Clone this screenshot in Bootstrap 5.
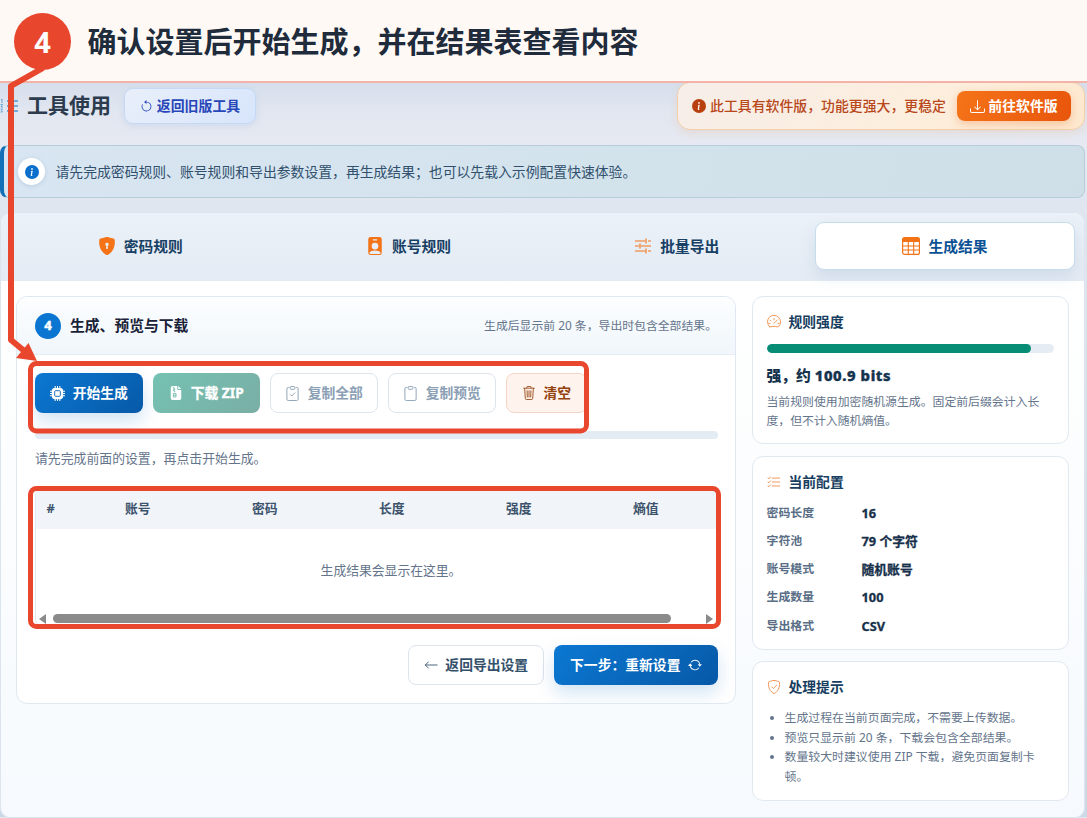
<!DOCTYPE html>
<html lang="zh-CN">
<head>
<meta charset="utf-8">
<meta name="viewport" content="width=device-width, initial-scale=1">
<title>工具使用</title>
<link href="https://cdn.jsdelivr.net/npm/bootstrap@5.3.0/dist/css/bootstrap.min.css" rel="stylesheet">
<style>
:root{--mark-red:#e8472d;--ink:#163a5c;--line:#e0e9f1;--muted-ink:#64748b;--orange:#f47316}
body{font-family:"Noto Sans","Noto Sans CJK SC",sans-serif;height:818px;overflow:hidden;color:#17324d;background:#e3e8f1;line-height:1.4;position:relative}
svg{display:block;flex:none}
.step-banner{height:83px;background:#fff9f6;border-bottom:2px solid #f4b3a8;padding:0 0 0 14px;position:relative;z-index:2}
.step-no{width:57px;height:57px;border-radius:50%;background:var(--mark-red);color:#fff;font-size:29px;font-weight:700;line-height:1;margin-top:2px}
.step-title{font-size:29px;font-weight:700;color:#202b3b;margin:4px 0 0 16.5px;line-height:1.4}
.workspace{height:735px;background:linear-gradient(180deg,#d5deec 0,#e1e6f0 28px,#e6e9f2 62px,#dfe6ef 130px,#ccd8e6 100%)}
.tool-head{height:48px;margin-top:-1px;padding-right:2px}
.tool-title{font-size:21px;font-weight:700;color:#2c3b4d;line-height:1;margin:-1px 13px 0 8px}
.old-btn{width:132px;height:36px;border:1px solid #c5d8f6;border-radius:9px;background:linear-gradient(135deg,#e9effa,#d7e5fb);color:#2746b8;font-size:13.9px;font-weight:600;gap:4px;box-shadow:0 2px 6px #9fb8df44}
.promo{width:408px;height:48px;border:1px solid #f4cfa9;border-radius:13px;background:linear-gradient(135deg,#f6eeea,#fdeedd 60%,#fde8cd);color:#b8481b;font-size:13.88px;font-weight:500;padding:0 13px 0 14px;box-shadow:0 3px 9px #e9a66833}
.promo-btn{width:114px;height:30px;border:0;border-radius:8px;background:linear-gradient(110deg,#f57419,#e8550c);color:#fff;font-size:13.9px;font-weight:700;gap:3px;box-shadow:0 3px 8px #e8590c44}
.notice{height:53px;margin:15px 2px 0 0;border:1px solid #b6cdda;border-left:4px solid #1170b8;border-radius:8px;background:linear-gradient(100deg,#d8e5f2,#d3e3ec 55%,#cfdfe8);color:#31506d;font-size:13.84px;padding-left:14px}
.notice-dot{width:27px;height:27px;border-radius:50%;background:#fff;margin-right:10.5px;box-shadow:0 1px 4px #5279a633}
.panel{height:606px;margin:14px 2px 0 0;border-radius:11px 11px 10px 10px;background:linear-gradient(180deg,#fff 0,#fff 70px,#fdfefe 180px,#f6fafe 100%);overflow:hidden;border:1px solid #dce5ee;border-top-color:#dfe5ef}
.tabs{height:68px;background:linear-gradient(180deg,#ebf1f8,#e4ebf4);padding:9px 9px 0 9px;gap:8px;display:grid;grid-template-columns:repeat(4,1fr)}
.tab-btn{height:48px;border:1px solid transparent;border-radius:9px;background:none;color:#174064;font-size:14.75px;font-weight:700;gap:8px;padding:0}
.tab-btn.active{background:#fff;border-color:#c6dced;color:#0b5294;box-shadow:0 7px 15px #6c8eb42b}
.box{border:1px solid var(--line);border-radius:11px;background:#fff}
.work-area{padding:15px 15px 0 15px;gap:16px}
.main-box{width:720px;height:408px;overflow:hidden}
.box-top{height:58px;background:linear-gradient(180deg,#fcfeff,#f0f6fb);border-bottom:1px solid #e6eef4;padding:0 18px}
.num{width:26px;height:26px;border-radius:50%;background:#0b76d1;color:#fff;font-size:13px;font-weight:800}
.box-title{font-size:14.8px;font-weight:700;color:#1a2238;margin-left:9px}
.tip-text{font-size:11.85px;color:var(--muted-ink)}
.acts{padding:18px 18px 0;gap:10px}
.act{height:40px;border-radius:8px;border:1px solid #dde4ec;background:#fff;font-size:13.8px;font-weight:700;color:#8ba0b4;gap:7.5px;padding:0}
.act-blue{color:#fff;border:0;background:linear-gradient(135deg,#0b78d2,#0759a7);box-shadow:0 8px 18px #0b6fc530}
.act-green{color:#fff;border:0;background:linear-gradient(135deg,#74c2b2,#7aaea5)}
.act-clear{color:#93430f;border-color:#f5d5c7;background:#fff3ed}
.run-track{height:8px;border-radius:5px;background:#e4ecf3;margin:18px 17px 0 18px}
.run-hint{font-size:12.87px;line-height:20px;color:var(--muted-ink);margin:9px 18px 0}
.result{margin:20px 17px 0 18px;height:139px;border:1px solid #e1e8ef;border-radius:8px;overflow:hidden}
.result table{width:710px;table-layout:fixed;border-collapse:collapse;font-size:12.8px}
.result th{height:40px;background:#f1f5fa;color:#3d526b;padding:0 14px;font-weight:700}
.result th:first-child{padding-left:10.5px}
.result td{height:84px;text-align:center;color:var(--muted-ink);padding-left:1px}
.bar-x{height:12px;padding:1px 3px 0}
.bar-thumb{width:618px;height:9px;border-radius:5px;background:#8b8b8b;margin:0 35px 0 7px}
.foot{padding:18px 17px 0;gap:10px}
.side{width:317px;gap:11.5px}
.side-box{padding:15px 14px 0 13.5px}
.side-title{font-size:13.8px;font-weight:700;color:#173e60;line-height:20px;gap:8px;margin:0}
.meter{height:9px;border-radius:5px;background:#e6ecf4;margin-top:12px;overflow:hidden}
.meter-on{height:9px;background:#078d76;border-radius:5px}
.score{font-size:14.8px;font-weight:800;line-height:22px;margin-top:11px;color:#16334e}
.score span{letter-spacing:.6px;-webkit-text-stroke:.4px currentColor}
.conf dd,.num,.zip-word{-webkit-text-stroke:.3px currentColor}
.desc{font-size:11.87px;line-height:19px;color:var(--muted-ink);margin:5.5px -6px 0 0}
.conf{display:grid;grid-template-columns:95px 1fr;row-gap:8.3px;line-height:20px;margin:11px 0 0}
.conf dt{font-size:11.9px;font-weight:600;color:#596e86;line-height:18px}
.conf dd{font-size:12.8px;font-weight:700;color:#17304a;margin:0}
.tips{font-size:11.9px;line-height:19.6px;color:var(--muted-ink);padding-left:18px;margin:11px 0 0}
.callout-layer{position:absolute;left:0;top:0;z-index:3;pointer-events:none}
</style>
</head>
<body>
<header class="step-banner d-flex align-items-center">
  <div class="step-no d-flex align-items-center justify-content-center">4</div>
  <h1 class="step-title">确认设置后开始生成，并在结果表查看内容</h1>
</header>
<main class="workspace d-flow-root">
  <div class="tool-head d-flex align-items-center">
    <svg width="19" height="16" viewBox="0 0 19 16" stroke="#4f9bd3" fill="none"><path d="M7 3h11M7 8h11M7 13h11" stroke-width="1.6"/><path d="M1 2l1-1v4M.5 6.5h2L1 9h2M.5 11h2l-1 1.500 1 1.500H.5" stroke-width=".8"/></svg>
    <h2 class="tool-title">工具使用</h2>
    <button class="btn old-btn d-flex align-items-center justify-content-center p-0"><svg width="13" height="13" viewBox="0 0 16 16" fill="currentColor"><path fill-rule="evenodd" d="M8 3a5 5 0 1 1-4.546 2.914.5.5 0 0 0-.908-.417A6 6 0 1 0 8 2z"/><path d="M8 4.466V.534a.25.25 0 0 0-.41-.192L5.230 2.308a.25.25 0 0 0 0 .384l2.360 1.966A.25.25 0 0 0 8 4.466"/></svg>返回旧版工具</button>
    <div class="promo d-flex align-items-center ms-auto">
      <svg width="14" height="14" viewBox="0 0 16 16" fill="#b8400e"><circle cx="8" cy="8" r="8"/><path fill="#fff" d="m8.930 6.588-2.290.287-.082.380.450.083c.294.070.352.176.288.469l-.738 3.468c-.194.897.105 1.319.808 1.319.545 0 1.178-.252 1.465-.598l.088-.416c-.200.176-.492.246-.686.246-.275 0-.375-.193-.304-.533zM9 4.500a1 1 0 1 1-2 0 1 1 0 0 1 2 0"/></svg>
      <span class="text-nowrap ms-1">此工具有软件版，功能更强大，更稳定</span>
      <button class="btn promo-btn d-flex align-items-center justify-content-center p-0 ms-auto"><svg width="15" height="15" viewBox="0 0 16 16" fill="currentColor"><path d="M.5 9.900a.5.5 0 0 1 .5.500v2.500a1 1 0 0 0 1 1h12a1 1 0 0 0 1-1v-2.500a.5.5 0 0 1 1 0v2.500a2 2 0 0 1-2 2H2a2 2 0 0 1-2-2v-2.500a.5.5 0 0 1 .5-.5"/><path d="M7.646 11.854a.5.5 0 0 0 .708 0l3-3a.5.5 0 0 0-.708-.708L8.500 10.293V1.500a.5.5 0 0 0-1 0v8.793L5.354 8.146a.5.5 0 1 0-.708.708z"/></svg>前往软件版</button>
    </div>
  </div>

  <div class="notice d-flex align-items-center">
    <span class="notice-dot d-flex align-items-center justify-content-center"><svg width="14" height="14" viewBox="0 0 16 16" fill="#0b70cc"><circle cx="8" cy="8" r="8"/><path fill="#fff" d="m8.930 6.588-2.290.287-.082.380.450.083c.294.070.352.176.288.469l-.738 3.468c-.194.897.105 1.319.808 1.319.545 0 1.178-.252 1.465-.598l.088-.416c-.200.176-.492.246-.686.246-.275 0-.375-.193-.304-.533zM9 4.500a1 1 0 1 1-2 0 1 1 0 0 1 2 0"/></svg></span>
    <span class="text-nowrap">请先完成密码规则、账号规则和导出参数设置，再生成结果；也可以先载入示例配置快速体验。</span>
  </div>

  <section class="panel">
    <nav class="tabs">
      <button class="btn tab-btn d-flex align-items-center justify-content-center"><svg width="18" height="18" viewBox="0 0 16 16" fill="#f47316"><path fill-rule="evenodd" d="M8 0c-.690 0-1.843.265-2.928.560-1.110.300-2.229.655-2.887.870a1.540 1.540 0 0 0-1.044 1.262c-.596 4.477.787 7.795 2.465 9.990a11.800 11.800 0 0 0 2.517 2.453c.386.273.744.482 1.048.625.280.132.581.240.829.240s.548-.108.829-.240a7 7 0 0 0 1.048-.625 11.800 11.800 0 0 0 2.517-2.453c1.678-2.195 3.061-5.513 2.465-9.990a1.540 1.540 0 0 0-1.044-1.263c-.658-.215-1.777-.562-2.887-.870C9.843.266 8.690 0 8 0m0 5a1.500 1.500 0 0 1 .5 2.915l.385 1.990a.5.5 0 0 1-.491.595h-.788a.5.5 0 0 1-.490-.595l.384-1.990A1.500 1.500 0 0 1 8 5"/></svg>密码规则</button>
      <button class="btn tab-btn d-flex align-items-center justify-content-center"><svg width="18" height="18" viewBox="0 0 16 16" fill="#f47316"><path fill-rule="evenodd" d="M2 2a2 2 0 0 1 2-2h8a2 2 0 0 1 2 2v12a2 2 0 0 1-2 2H4a2 2 0 0 1-2-2zm4.500 0a.5.5 0 0 0 0 1h3a.5.5 0 0 0 0-1zM8 11a3 3 0 1 0 0-6 3 3 0 0 0 0 6m5 2.755C12.146 12.825 10.623 12 8 12s-4.146.826-5 1.755V14a1 1 0 0 0 1 1h8a1 1 0 0 0 1-1z"/></svg>账号规则</button>
      <button class="btn tab-btn d-flex align-items-center justify-content-center"><svg width="18" height="18" viewBox="0 0 18 18" fill="none" stroke="#f47316" stroke-width="1.150"><path d="M1 4h10M14 4h3M12 1.500v5M1 9h4M7 9h10M6 6.500v5M1 14h10M14 14h3M12 11.500v5"/></svg>批量导出</button>
      <button class="btn tab-btn active d-flex align-items-center justify-content-center"><svg width="18" height="18" viewBox="0 0 18 18"><rect x=".6" y=".6" width="16.800" height="16.800" rx="2" fill="#fff" stroke="#f47316" stroke-width="1.200"/><path d="M.5 5V2.500a2 2 0 0 1 2-2h13a2 2 0 0 1 2 2V5z" fill="#f47316"/><path d="M.5 9h17M.5 13h17M6.300 5v12.500M11.700 5v12.500" stroke="#f47316" stroke-width="1.100"/></svg>生成结果</button>
    </nav>
    <div class="work-area d-flex align-items-start">
      <article class="box main-box flex-shrink-0">
        <div class="box-top d-flex align-items-center">
          <span class="num d-flex align-items-center justify-content-center">4</span>
          <span class="box-title">生成、预览与下载</span>
          <span class="tip-text ms-auto">生成后显示前 20 条，导出时包含全部结果。</span>
        </div>
        <div class="acts d-flex">
          <button class="btn act act-blue d-flex align-items-center justify-content-center" style="width:108px"><svg width="15" height="15" viewBox="0 0 16 16"><path d="M5.500 0v16M8 0v16M10.500 0v16M0 5.500h16M0 8h16M0 10.500h16" stroke="#fff" stroke-width="1.100"/><rect x="2" y="2" width="12" height="12" rx="3" fill="#fff"/><rect x="5" y="5" width="6" height="6" rx="1" fill="none" stroke="#1768b5"/></svg>开始生成</button>
          <button class="btn act act-green d-flex align-items-center justify-content-center" style="width:107px"><svg width="14" height="14" viewBox="0 0 16 16"><path d="M4 0h5.500v3.500a1 1 0 0 0 1 1H14V14a2 2 0 0 1-2 2H4a2 2 0 0 1-2-2V2a2 2 0 0 1 2-2m6.500 0L14 3.500h-3.500z" fill="#fff"/><path d="M5 1v1.500h1.500V4H5v1.500h1.500V7M5 8.500h3v4H5zM5 10.500h3" fill="none" stroke="#74b8aa"/></svg><span class="zip-word">下载 ZIP</span></button>
          <button class="btn act d-flex align-items-center justify-content-center" style="width:108px"><svg width="15" height="15" viewBox="0 0 16 16" fill="none" stroke="currentColor"><path d="M4.500 1.500h-1a1.500 1.500 0 0 0-1.500 1.500v11a1.500 1.500 0 0 0 1.500 1.500h9A1.500 1.500 0 0 0 14 14V3a1.500 1.500 0 0 0-1.500-1.500h-1M6.500.5h3a1 1 0 0 1 1 1v1a1 1 0 0 1-1 1h-3a1 1 0 0 1-1-1v-1a1 1 0 0 1 1-1zM5.500 9l1.700 1.700L10.700 7"/></svg>复制全部</button>
          <button class="btn act d-flex align-items-center justify-content-center" style="width:108px"><svg width="15" height="15" viewBox="0 0 16 16" fill="none" stroke="currentColor"><path d="M4.500 1.500h-1a1.500 1.500 0 0 0-1.500 1.500v11a1.500 1.500 0 0 0 1.500 1.500h9A1.500 1.500 0 0 0 14 14V3a1.500 1.500 0 0 0-1.500-1.500h-1M6.500.5h3a1 1 0 0 1 1 1v1a1 1 0 0 1-1 1h-3a1 1 0 0 1-1-1v-1a1 1 0 0 1 1-1z"/></svg>复制预览</button>
          <button class="btn act act-clear d-flex align-items-center justify-content-center" style="width:81px"><svg width="14" height="14" viewBox="0 0 16 16" fill="none" stroke="currentColor"><path d="M1.500 2.500h13M5.500 2.500v-1a1 1 0 0 1 1-1h3a1 1 0 0 1 1 1v1M3 2.500l.8 11.600a1.500 1.500 0 0 0 1.500 1.400h5.400a1.500 1.500 0 0 0 1.500-1.400L13 2.500M5.800 5l.3 8M8 5v8M10.200 5l-.3 8"/></svg>清空</button>
        </div>
        <div class="run-track"></div>
        <div class="run-hint">请先完成前面的设置，再点击开始生成。</div>
        <div class="result">
          <table>
            <colgroup><col style="width:75px"><col span="5" style="width:127px"></colgroup>
            <thead><tr><th>#</th><th>账号</th><th>密码</th><th>长度</th><th>强度</th><th>熵值</th></tr></thead>
            <tbody><tr><td colspan="6">生成结果会显示在这里。</td></tr></tbody>
          </table>
          <div class="bar-x d-flex"><svg width="7" height="10" viewBox="0 0 7 10"><path d="M7 0v10L0 5z" fill="#8b8b8b"/></svg><div class="bar-thumb flex-shrink-0"></div><svg width="7" height="10" viewBox="0 0 7 10"><path d="M0 0v10l7-5z" fill="#8b8b8b"/></svg></div>
        </div>
        <div class="foot d-flex justify-content-end">
          <button class="btn act d-flex align-items-center justify-content-center" style="width:136px;color:#34516c"><svg width="14" height="14" viewBox="0 0 16 16" fill="none" stroke="currentColor" stroke-linecap="round"><path d="M15 8H1.500M5 4.500L1.500 8 5 11.500"/></svg>返回导出设置</button>
          <button class="btn act act-blue d-flex align-items-center justify-content-center" style="width:164px">下一步：重新设置<svg width="14" height="14" viewBox="0 0 16 16" fill="#fff"><path d="M11.534 7h3.932a.25.25 0 0 1 .192.410l-1.966 2.360a.25.25 0 0 1-.384 0l-1.966-2.360a.25.25 0 0 1 .192-.410m-11 2h3.932a.25.25 0 0 0 .192-.410L2.692 6.230a.25.25 0 0 0-.384 0L.342 8.590A.25.25 0 0 0 .534 9"/><path fill-rule="evenodd" d="M8 3c-1.552 0-2.940.707-3.857 1.818a.5.5 0 1 1-.771-.636A6.002 6.002 0 0 1 13.917 7H12.900A5 5 0 0 0 8 3M3.100 9a5.002 5.002 0 0 0 8.757 2.182.5.5 0 1 1 .771.636A6.002 6.002 0 0 1 2.083 9z"/></svg></button>
        </div>
      </article>

      <aside class="side d-flex flex-column flex-shrink-0">
        <div class="box side-box" style="height:148px">
          <h3 class="side-title d-flex align-items-center"><svg width="14" height="14" viewBox="0 0 16 16" fill="none" stroke="#f58a45" stroke-linecap="round"><path d="M3 13.500a7.500 7.500 0 1 1 10 0c-1 .5-1.500-.5-5-.5s-4 1-5 .5zM8 4v1.500M3.500 6l1 .8M2 9.500h1.500M12.500 9.500H14M8 9.500L11.800 5.700"/></svg>规则强度</h3>
          <div class="meter"><div class="meter-on" style="width:92%"></div></div>
          <div class="score">强，约 <span>100.9 bits</span></div>
          <p class="desc">当前规则使用加密随机源生成。固定前后缀会计入长<br>度，但不计入随机熵值。</p>
        </div>
        <div class="box side-box" style="height:194px">
          <h3 class="side-title d-flex align-items-center"><svg width="14" height="14" viewBox="0 0 16 16" fill="none" stroke="#f58a45" stroke-linecap="round" stroke-linejoin="round"><path d="M6 3.500h8.500M6 8h8.500M6 12.500h8.500M1 3.500l1 1 2-2.300M1 8l1 1 2-2.300M1 12.500l1 1 2-2.300"/></svg>当前配置</h3>
          <dl class="conf">
            <dt>密码长度</dt><dd>16</dd>
            <dt>字符池</dt><dd>79 个字符</dd>
            <dt>账号模式</dt><dd>随机账号</dd>
            <dt>生成数量</dt><dd>100</dd>
            <dt>导出格式</dt><dd>CSV</dd>
          </dl>
        </div>
        <div class="box side-box" style="height:140px">
          <h3 class="side-title d-flex align-items-center"><svg width="14" height="14" viewBox="0 0 16 16" fill="none" stroke="#f58a45" stroke-linecap="round" stroke-linejoin="round"><path d="M8 .5C6.500.5 4 1.300 2.400 1.900a1 1 0 0 0-.7.9C1.200 8.500 3.500 13.300 8 15.500c4.500-2.200 6.800-7 6.300-12.700a1 1 0 0 0-.7-.9C12 1.300 9.500.5 8 .5zM5.500 8l1.700 1.700L11 6"/></svg>处理提示</h3>
          <ul class="tips">
            <li>生成过程在当前页面完成，不需要上传数据。</li>
            <li>预览只显示前 20 条，下载会包含全部结果。</li>
            <li>数量较大时建议使用 ZIP 下载，避免页面复制卡顿。</li>
          </ul>
        </div>
      </aside>
    </div>
  </section>
</main>
<svg class="callout-layer" width="1087" height="818" fill="none" stroke="#e8472d" stroke-linejoin="round">
  <path d="M43 68L11 86V340L28 354" stroke-width="6"/>
  <path d="M37 361L28.500 343L16 358z" fill="#e8472d" stroke="none"/>
  <rect x="30.500" y="363.500" width="556" height="67.500" rx="6" stroke-width="5"/>
  <rect x="30.500" y="488.500" width="688" height="138" rx="6" stroke-width="5"/>
</svg>
<script src="https://cdn.jsdelivr.net/npm/bootstrap@5.3.0/dist/js/bootstrap.bundle.min.js"></script>
</body>
</html>
